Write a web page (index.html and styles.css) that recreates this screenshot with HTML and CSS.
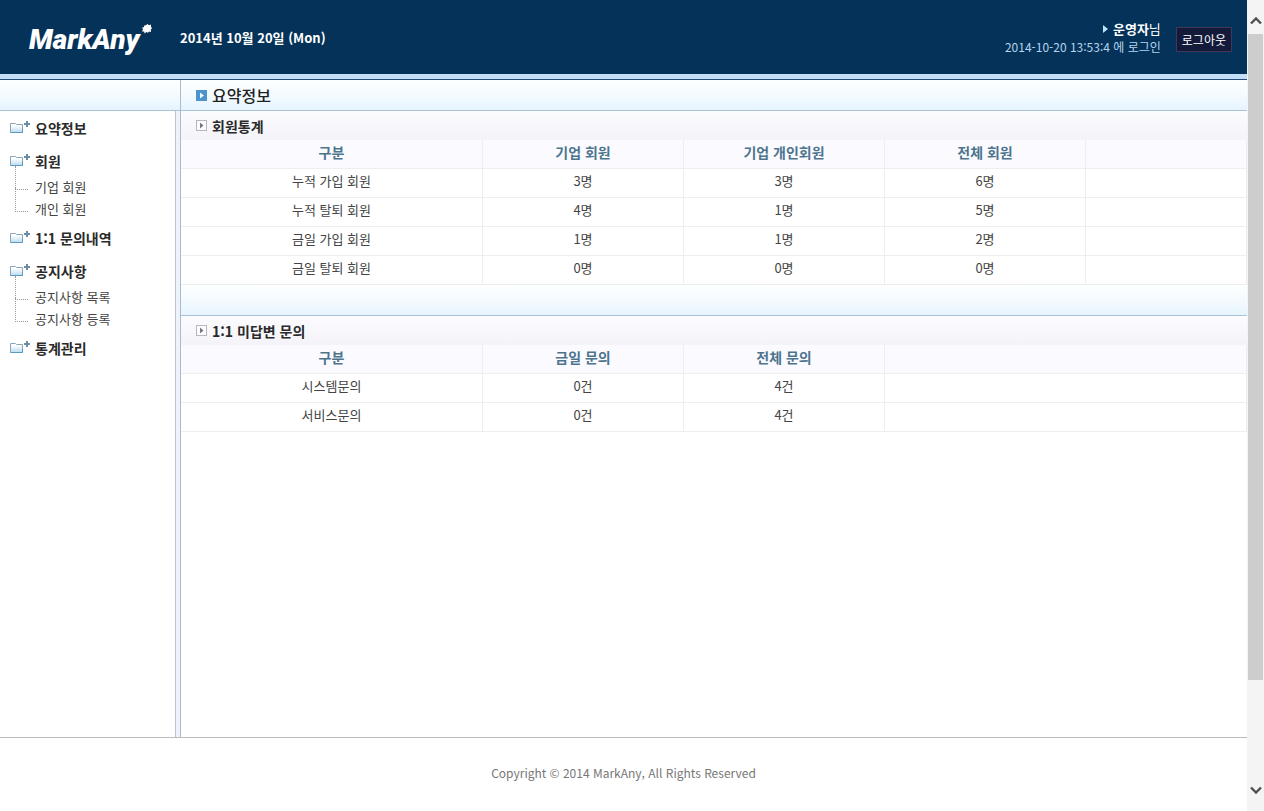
FILE: index.html
```html
<!DOCTYPE html>
<html lang="ko">
<head>
<meta charset="utf-8">
<title>MarkAny 관리자</title>
<link rel="stylesheet" href="styles.css">
</head>
<body>
<svg class="defs" width="0" height="0" aria-hidden="true">
  <defs>
    <linearGradient id="folder-fill" x1="0" y1="0" x2="0" y2="1">
      <stop offset="0.2" stop-color="#ffffff"/>
      <stop offset="1" stop-color="#b9dcf0"/>
    </linearGradient>
    <symbol id="folder" viewBox="0 0 20 14">
      <path d="M0.500 12.500V3.500H5.500L6.500 4.500H12.500V12.500Z" fill="url(#folder-fill)" stroke="#8aa5b8"/>
      <path d="M0.500 12.500H12.500V9" fill="none" stroke="#5e9ac0"/>
      <path d="M16 1h2v2h2v2h-2v2h-2v-2h-2v-2h2z" fill="#6c8ba5"/>
    </symbol>
    <symbol id="section" viewBox="0 0 11 11">
      <rect x="0.5" y="0.5" width="10" height="10" fill="#fcfcff" stroke="#b7b7c0"/>
      <path d="M4 2.500L7.500 5.500L4 8.500Z" fill="#77778a"/>
    </symbol>
  </defs>
</svg>
<div class="window">
  <div class="page">
    <header class="header">
      <a class="logo" href="#">MarkAny<svg class="splat" width="10" height="10" viewBox="0 0 10 10" aria-hidden="true"><path d="M3.500 1.500L5.500 0L7 1.200L9 0.500L9 2.800L10 4.200L8.800 5.500L9 8L7 7.500L6 8.800L4.500 8L2.500 9.500L2.200 7.500L0 7.500L1 5.500L0 3.800L2 3L2 1.500Z" fill="#fff"/></svg></a>
      <p class="date">2014년 10월 20일 (Mon)</p>
      <div class="account">
        <p class="user"><svg width="5" height="8" viewBox="0 0 5 8" aria-hidden="true"><path d="M0 0L5 4L0 8Z" fill="#b9e4fb"/></svg><span><strong>운영자</strong>님</span></p>
        <p class="login">2014-10-20 13:53:4 에 로그인</p>
      </div>
      <button class="logout" type="button">로그아웃</button>
    </header>
    <div class="body">
      <nav class="sidebar">
        <div class="band"></div>
        <ul class="menu">
          <li class="group"><a class="head" href="#"><svg width="20" height="14"><use href="#folder"/></svg>요약정보</a></li>
          <li class="group"><a class="head" href="#"><svg width="20" height="14"><use href="#folder"/></svg>회원</a>
            <ul class="sub"><li><a href="#">기업 회원</a></li><li><a href="#">개인 회원</a></li></ul>
          </li>
          <li class="group"><a class="head" href="#"><svg width="20" height="14"><use href="#folder"/></svg>1:1 문의내역</a></li>
          <li class="group"><a class="head" href="#"><svg width="20" height="14"><use href="#folder"/></svg>공지사항</a>
            <ul class="sub"><li><a href="#">공지사항 목록</a></li><li><a href="#">공지사항 등록</a></li></ul>
          </li>
          <li class="group"><a class="head" href="#"><svg width="20" height="14"><use href="#folder"/></svg>통계관리</a></li>
        </ul>
      </nav>
      <main class="content">
        <h1 class="title"><svg width="11" height="11" viewBox="0 0 11 11" aria-hidden="true"><rect width="11" height="11" fill="#4e93cc"/><path d="M4 2.500L8 5.500L4 8.500Z" fill="#e8fbff"/></svg>요약정보</h1>
        <section>
          <h2 class="subtitle"><svg width="11" height="11"><use href="#section"/></svg>회원통계</h2>
          <table class="grid">
            <colgroup><col class="label"><col class="num"><col class="num"><col class="num"><col></colgroup>
            <thead><tr><th>구분</th><th>기업 회원</th><th>기업 개인회원</th><th>전체 회원</th><th></th></tr></thead>
            <tbody>
              <tr><td>누적 가입 회원</td><td>3명</td><td>3명</td><td>6명</td><td></td></tr>
              <tr><td>누적 탈퇴 회원</td><td>4명</td><td>1명</td><td>5명</td><td></td></tr>
              <tr><td>금일 가입 회원</td><td>1명</td><td>1명</td><td>2명</td><td></td></tr>
              <tr><td>금일 탈퇴 회원</td><td>0명</td><td>0명</td><td>0명</td><td></td></tr>
            </tbody>
          </table>
        </section>
        <div class="band"></div>
        <section>
          <h2 class="subtitle"><svg width="11" height="11"><use href="#section"/></svg>1:1 미답변 문의</h2>
          <table class="grid">
            <colgroup><col class="label"><col class="num"><col class="num"><col></colgroup>
            <thead><tr><th>구분</th><th>금일 문의</th><th>전체 문의</th><th></th></tr></thead>
            <tbody>
              <tr><td>시스템문의</td><td>0건</td><td>4건</td><td></td></tr>
              <tr><td>서비스문의</td><td>0건</td><td>4건</td><td></td></tr>
            </tbody>
          </table>
        </section>
      </main>
    </div>
    <footer class="footer">Copyright © 2014 MarkAny, All Rights Reserved</footer>
  </div>
  <div class="scrollbar" aria-hidden="true">
    <svg width="12" height="8" viewBox="0 0 12 8"><path d="M1 6.500L6 1.500L11 6.500" fill="none" stroke="#505050" stroke-width="2.400"/></svg>
    <div class="track"><div class="thumb"></div></div>
    <svg width="12" height="8" viewBox="0 0 12 8"><path d="M1 1.500L6 6.500L11 1.500" fill="none" stroke="#505050" stroke-width="2.400"/></svg>
  </div>
</div>
</body>
</html>
```

FILE: styles.css
```css
* { box-sizing: border-box; }
body {
  margin: 0;
  background: #fff;
  color: #444;
  font: 13px/22px "Noto Sans CJK KR", sans-serif;
}
a { color: inherit; text-decoration: none; }
p, h1, h2, ul { margin: 0; padding: 0; }
ul { list-style: none; }
svg { flex: none; display: block; }
.defs { position: absolute; }

.window { display: flex; min-height: 100vh; }
.page { flex: 1; min-width: 0; display: flex; flex-direction: column; }

.header {
  display: flex;
  align-items: center;
  height: 80px;
  padding: 0 15px 0 29px;
  background: #043259;
  border-bottom: 1px solid #234a78;
  box-shadow: inset 0 -5px #c5def8;
  color: #fff;
}
.logo {
  display: flex;
  width: 151px;
  font: italic 900 28px/32px Roboto, sans-serif;
}
.splat { margin-left: 2px; }
.date { padding-bottom: 3px; font-size: 13px; font-weight: 700; line-height: 18px; }
.account {
  margin-left: auto;
  margin-right: 15px;
  padding-bottom: 4px;
  text-align: right;
  line-height: 18px;
}
.user { display: flex; justify-content: flex-end; align-items: center; gap: 5px; }
.login { font-size: 12px; color: #b5d4ee; }
.logout {
  height: 25px;
  padding: 0 5px;
  border: 1px solid #443659;
  background: #141a3a;
  color: #fff;
  font: 12px/20px "Noto Sans CJK KR", sans-serif;
}

.body { flex: 1; display: flex; }
.band {
  height: 31px;
  background: linear-gradient(#fdffff, #f4fbff 50%, #e6f4fe);
  border-bottom: 1px solid #a9c4d8;
}
.sidebar {
  flex: none;
  width: 181px;
  display: flex;
  flex-direction: column;
  background: #edf2fb;
  border-right: 1px solid #a9bccf;
}
.menu {
  flex: 1;
  margin-right: 4px;
  padding-top: 6px;
  background: #fff;
  border-right: 1px solid #b8c3d0;
}
.group { padding-bottom: 7px; }
.head {
  display: flex;
  align-items: center;
  gap: 5px;
  padding-left: 10px;
  padding-bottom: 4px;
  color: #2a2a2a;
  font-size: 14px;
  font-weight: 700;
}
.head svg { margin-bottom: 2px; }
.sub li { display: flex; padding-left: 15px; gap: 7px; }
.sub li::before {
  content: "";
  width: 12px;
  height: 23px;
  margin-top: -10px;
  border-left: 1px dotted #999;
  border-bottom: 1px dotted #999;
}

.content { flex: 1; min-width: 0; }
.title, .subtitle { display: flex; align-items: center; gap: 5px; padding-left: 15px; }
.title {
  height: 31px;
  background: linear-gradient(#fdffff, #f4fbff 50%, #e6f4fe);
  border-bottom: 1px solid #a9c4d8;
  color: #222;
  font-size: 16px;
  font-weight: 500;
}
.subtitle {
  height: 29px;
  background: linear-gradient(#fcfcff, #f3f3f9);
  color: #2a2a2a;
  font-size: 14px;
  font-weight: 700;
}
.grid { width: 100%; table-layout: fixed; border-collapse: separate; border-spacing: 0; }
.label { width: 302px; }
.num { width: 201px; }
.grid th, .grid td {
  height: 29px;
  padding: 0 0 4px;
  border-bottom: 1px solid #eee;
  border-right: 1px solid #eee;
  line-height: 22px;
  text-align: center;
}
.grid th { background: #fbfbff; color: #4d748d; font-size: 14px; font-weight: 700; }

.footer {
  height: 74px;
  padding-top: 24px;
  border-top: 1px solid #bbb;
  color: #777;
  font-size: 12px;
  text-align: center;
}

.scrollbar {
  flex: none;
  width: 17px;
  display: flex;
  flex-direction: column;
  align-items: center;
  gap: 9px;
  padding: 17px 1px;
  background: #f4f4f4;
}
.track { flex: 1; align-self: stretch; }
.thumb { height: 87%; background: #cdcdcd; }
```
